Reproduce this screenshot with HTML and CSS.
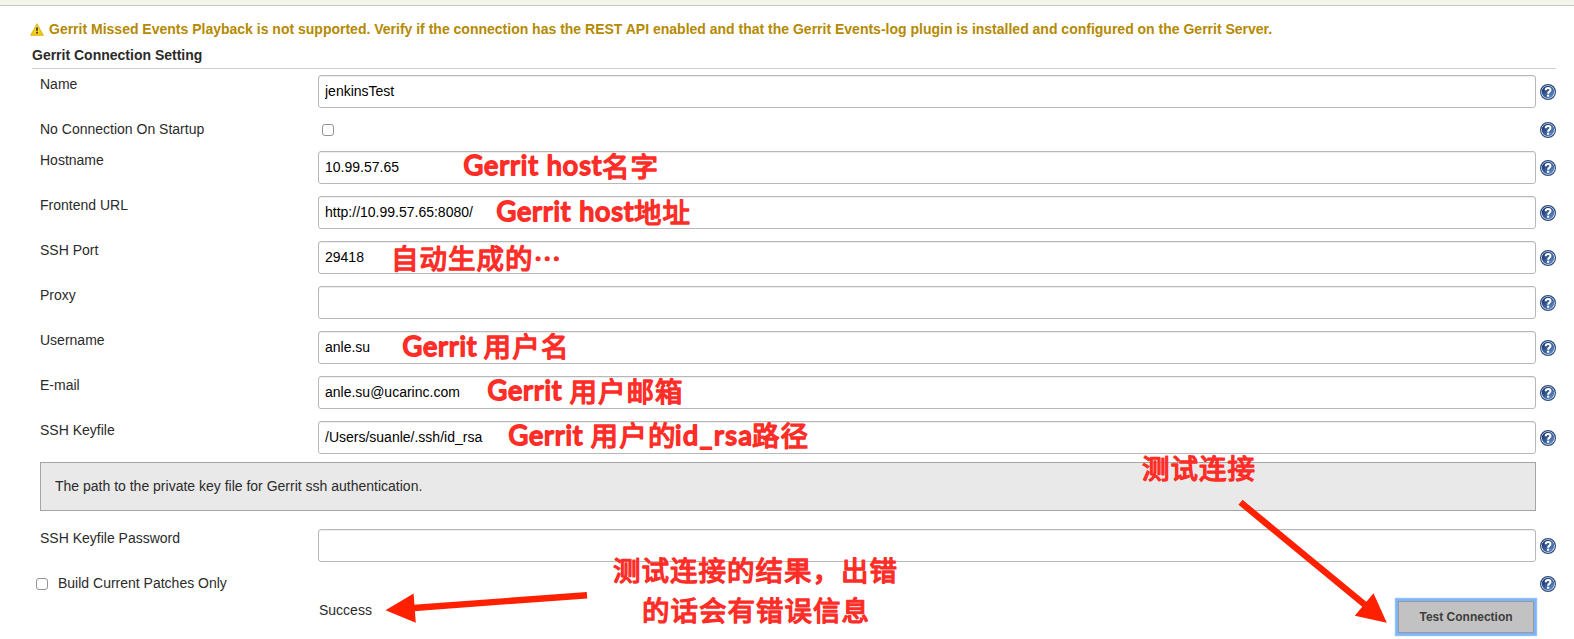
FILE: index.html
```html
<!DOCTYPE html>
<html lang="en">
<head>
<meta charset="utf-8">
<title>Gerrit Connection Setting</title>
<link rel="stylesheet" href="styles.css">
</head>
<body>
<svg class="defs" width="0" height="0" aria-hidden="true">
  <defs>
    <linearGradient id="blue" x1="0" y1="0" x2="1" y2="1">
      <stop offset="0.2" stop-color="#1d3d78"/><stop offset="1" stop-color="#6d97cf"/>
    </linearGradient>
    <linearGradient id="amber" x1="0" y1="0" x2="0" y2="1">
      <stop offset="0" stop-color="#fbe87a"/><stop offset="1" stop-color="#f0c800"/>
    </linearGradient>
    <symbol id="help" viewBox="0 0 16 16">
      <circle cx="8" cy="8" r="7.4" fill="#fff" stroke="#2a4b82" stroke-width="1.2"/>
      <circle cx="8" cy="8" r="6.2" fill="url(#blue)"/>
      <path d="M5.7 6.2C5.7 3.2 10.5 3.4 10.5 6C10.5 7.7 8.1 7.6 8.1 9.7" fill="none" stroke="#fff" stroke-width="2"/>
      <rect x="7" y="10.7" width="2.2" height="2" fill="#fff"/>
    </symbol>
  </defs>
</svg>
<div class="topbar"></div>
<main class="page">
  <div class="warning">
    <svg class="warn-icon" viewBox="0 0 14 13"><path d="M7 .9L13.2 12.2H.8Z" fill="url(#amber)" stroke="#dfb520" stroke-width="1.1" stroke-linejoin="round"/><path d="M6 4.4h2l-.35 3.9h-1.3zM6.1 9.1h1.8v1.5H6.1z" fill="#3d3b28"/></svg>
    <span>Gerrit Missed Events Playback is not supported. Verify if the connection has the REST API enabled and that the Gerrit Events-log plugin is installed and configured on the Gerrit Server.</span>
  </div>
  <h2 class="heading">Gerrit Connection Setting</h2>
  <form class="form">
    <div class="row"><label>Name</label><input class="text" value="jenkinsTest"><svg class="help"><use href="#help"/></svg></div>
    <div class="row short"><label>No Connection On Startup</label><input class="check" type="checkbox"><svg class="help"><use href="#help"/></svg></div>
    <div class="row"><label>Hostname</label><input class="text" value="10.99.57.65"><svg class="help"><use href="#help"/></svg></div>
    <div class="row"><label>Frontend URL</label><input class="text" value="http://10.99.57.65:8080/"><svg class="help"><use href="#help"/></svg></div>
    <div class="row"><label>SSH Port</label><input class="text" value="29418"><svg class="help"><use href="#help"/></svg></div>
    <div class="row"><label>Proxy</label><input class="text"><svg class="help"><use href="#help"/></svg></div>
    <div class="row"><label>Username</label><input class="text" value="anle.su"><svg class="help"><use href="#help"/></svg></div>
    <div class="row"><label>E-mail</label><input class="text" value="anle.su@ucarinc.com"><svg class="help"><use href="#help"/></svg></div>
    <div class="row last"><label>SSH Keyfile</label><input class="text" value="/Users/suanle/.ssh/id_rsa"><svg class="help"><use href="#help"/></svg></div>
    <div class="help-text">The path to the private key file for Gerrit ssh authentication.</div>
    <div class="row"><label>SSH Keyfile Password</label><input class="text" type="password"><svg class="help"><use href="#help"/></svg></div>
    <div class="option"><input class="check" type="checkbox"><label>Build Current Patches Only</label><svg class="help"><use href="#help"/></svg></div>
    <div class="result"><span class="status">Success</span><button class="test" type="button">Test Connection</button></div>
  </form>
</main>
<svg class="notes" viewBox="0 0 1574 639">
  <g class="note">
    <text y="175.3"><tspan class="latin" x="463.5" textLength="138">Gerrit host</tspan><tspan x="602" dy="2" textLength="56">名字</tspan></text>
    <text y="221"><tspan class="latin" x="496.5" textLength="137">Gerrit host</tspan><tspan x="634" dy="2" textLength="56">地址</tspan></text>
    <text x="391" y="268.8" textLength="170">自动生成的⋯</text>
    <text y="355.7"><tspan class="latin" x="402.5" textLength="74">Gerrit</tspan><tspan x="483.5" dy="1.5" textLength="85">用户名</tspan></text>
    <text y="400"><tspan class="latin" x="487.5" textLength="74">Gerrit</tspan><tspan x="569.5" dy="1.5" textLength="113">用户邮箱</tspan></text>
    <text y="444.7"><tspan class="latin" x="508.5" textLength="74">Gerrit</tspan><tspan x="590.5" dy="1.5" textLength="85">用户的</tspan><tspan class="latin" x="675" dy="-1.5" textLength="77">id_rsa</tspan><tspan x="752" dy="1.5" textLength="56">路径</tspan></text>
    <text x="1142" y="479" textLength="113">测试连接</text>
    <text x="613" y="581" textLength="284">测试连接的结果，出错</text>
    <text x="642" y="621" textLength="227">的话会有错误信息</text>
  </g>
  <g class="arrow">
    <path d="M410 608.3L587 595.2"/><path class="head" d="M385.5 610.3L413.6 593.5L415.8 622.8Z"/>
    <path d="M1240.5 502.3L1367 606.5"/><path class="head" d="M1386.8 622.8L1373.5 593.3L1354.8 615.8Z"/>
  </g>
</svg>
</body>
</html>
```

FILE: styles.css
```css
* { box-sizing: border-box; }
body { margin: 0; height: 639px; overflow: hidden; background: #fff; color: #2b2b2b; font: 14px/18px "Liberation Sans", Arial, sans-serif; }
.defs { position: absolute; }
.topbar { height: 6px; background: #f4f6ee; border-bottom: 1px solid #c6c7bf; }
.page { padding: 14px 18px 0 30px; }
.warning { display: flex; align-items: center; height: 18px; gap: 5px; color: #b58900; font-weight: bold; white-space: nowrap; }
.warn-icon { width: 14px; height: 13px; }
.heading { margin: 8px 0 6px 2px; height: 23px; border-bottom: 1px solid #d0d0d0; font-size: 14px; line-height: 19px; }
.form { padding-left: 10px; }
.row { display: grid; grid-template-columns: 278px 1218px 16px; column-gap: 0; height: 45px; align-items: start; }
.row .help { margin: 9px 0 0 4px; }
.short { height: 31px; }
.row.short .help { margin-top: 2px; }
.last { height: 41px; }
.text { width: 1218px; height: 33px; padding: 0 6px 2px; border: 1px solid #b8b8b8; border-radius: 3px; background: #fff; box-shadow: inset 0 1px 1px #ededed; color: #000; font: 14px "Liberation Sans", Arial, sans-serif; outline: 0; }
.help { width: 16px; height: 16px; overflow: visible; }
.check { appearance: none; width: 12px; height: 12px; margin: 4px 0 0 4px; border: 1px solid #929292; border-radius: 3px; background: #fff; }
.help-text { width: 1496px; height: 49px; margin-bottom: 18px; padding: 14px; border: 1px solid #a5a5a5; background: #e9e9e9; }
.option { display: flex; align-items: flex-start; height: 27px; margin-left: -4px; }
.option .check { margin: 4px 10px 0 0; }
.option .help { margin: 2px 0 0 auto; }
.result { display: flex; justify-content: space-between; width: 1494px; padding-left: 279px; }
.status { padding-top: 0; }
.test { width: 136px; height: 32px; border: 1px solid #999; background: #c2c2c2; box-shadow: 0 0 0 2px #7db4fa, 0 0 1px 3px #8fc0ff; color: #3d3d3d; font: bold 12px "Liberation Sans", Arial, sans-serif; }
.notes { position: absolute; left: 0; top: 0; width: 1574px; height: 639px; pointer-events: none; }
.note { fill: #ff2d27; stroke: #ff2d27; stroke-width: 1.4; stroke-linejoin: round; font-family: "Noto Sans CJK SC", sans-serif; font-size: 27.5px; font-weight: 400; }
.latin { font-family: Lato, "Noto Sans CJK SC", sans-serif; font-weight: 400; font-size: 27px; stroke-width: 1.9; }
.arrow { fill: none; stroke: #ff2000; stroke-width: 6.4; }
.arrow .head { fill: #ff2000; stroke: none; }
```
